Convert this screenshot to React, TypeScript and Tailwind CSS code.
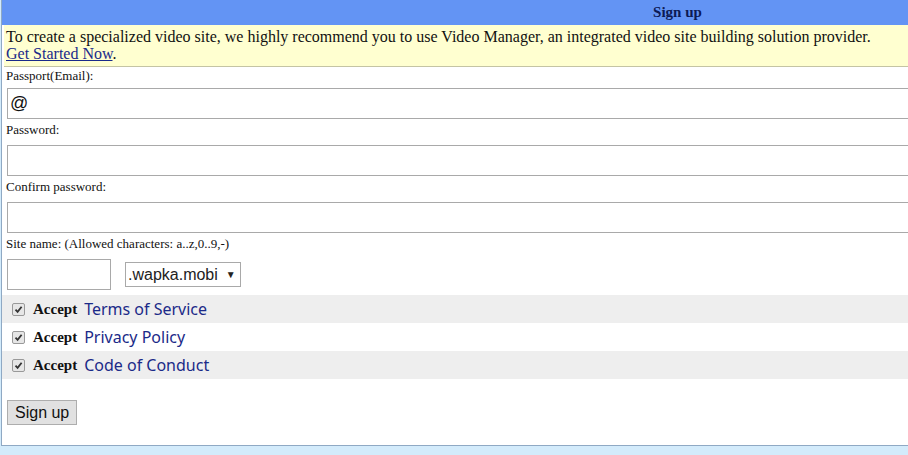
import React from 'react';

const rows = [
  { label: 'Terms of Service', shade: true },
  { label: 'Privacy Policy', shade: false },
  { label: 'Code of Conduct', shade: true },
];

export default function App() {
  return (
    <div className="h-[455px] w-[908px] overflow-hidden bg-[#d3ebfb] font-['Liberation_Serif',serif] text-[#111]">
      <div className="w-[1352px] border-l border-b border-[#8fa9c4] bg-white ml-px">
        <div className="h-[25px] bg-[#6394f4] flex items-center justify-center">
          <span className="text-[15px] font-bold text-[#0c1a55]">Sign up</span>
        </div>
        <div className="ml-[2px] h-[42px] bg-[#ffffd0] border-b border-[#c4c4a4] px-[2px] pt-[3px] text-[16px] leading-[17px]">
          <div>To create a specialized video site, we highly recommend you to use Video Manager, an integrated video site building solution provider.</div>
          <div>
            <a href="#" className="underline text-[#1a2a8a]">Get Started Now</a>.
          </div>
        </div>

        <form className="px-[4px]">
          <Field label="Passport(Email):" value="@" first />
          <Field label="Password:" value="" />
          <Field label="Confirm password:" value="" />

          <div className="pt-[3px] text-[13px] leading-[16px]">Site name: (Allowed characters: a..z,0..9,-)</div>
          <div className="flex items-center gap-[14px] pt-[7px] pl-px">
            <input className="w-[104px] h-[31px] border border-[#a9a9a9] bg-white outline-none" />
            <div className="flex items-center h-[25px] px-[2px] border border-[#a9a9a9] bg-white font-['Liberation_Sans',sans-serif] text-[16px] text-[#222]">
              <span>.wapka.mobi</span>
              <span className="ml-[8px] mr-[2px] text-[10px]">▼</span>
            </div>
          </div>

          <div className="mt-[5px] -mx-[4px]">
            {rows.map((r) => (
              <div
                key={r.label}
                className={`h-[28px] flex items-center pl-[10px] ${r.shade ? 'bg-[#eeeeee]' : 'bg-white'}`}
              >
                <span className="w-[13px] h-[13px] border border-[#999] rounded-[2px] bg-[#e6e6e6] flex items-center justify-center">
                  <svg width="9" height="9" viewBox="0 0 9 9">
                    <path d="M1.5 4.6 L3.6 6.8 L7.6 1.8" fill="none" stroke="#333" strokeWidth="1.8" />
                  </svg>
                </span>
                <span className="ml-[8px] text-[15px] font-bold">Accept</span>
                <a href="#" className="ml-[7px] font-['Noto_Sans',sans-serif] text-[16px] text-[#1b2a88]">{r.label}</a>
              </div>
            ))}
          </div>

          <div className="pt-[21px] pb-[20px] pl-px">
            <button
              type="button"
              className="h-[25px] px-[7px] border border-[#adadad] bg-[#e1e1e1] font-['Liberation_Sans',sans-serif] text-[16px] text-[#111]"
            >
              Sign up
            </button>
          </div>
        </form>
      </div>
    </div>
  );
}

function Field({ label, value, first }: { label: string; value: string; first?: boolean }) {
  return (
    <div>
      <div className={`${first ? 'pt-px leading-[15px]' : 'pt-[3px] leading-[16px]'} text-[13px]`}>{label}</div>
      <div className={`${first ? 'pt-[5px]' : 'pt-[7px]'} pl-px`}>
        <input
          defaultValue={value}
          className="w-[1330px] h-[31px] border border-[#a9a9a9] bg-white px-[2px] font-['Liberation_Sans',sans-serif] text-[18px] outline-none"
        />
      </div>
    </div>
  );
}
